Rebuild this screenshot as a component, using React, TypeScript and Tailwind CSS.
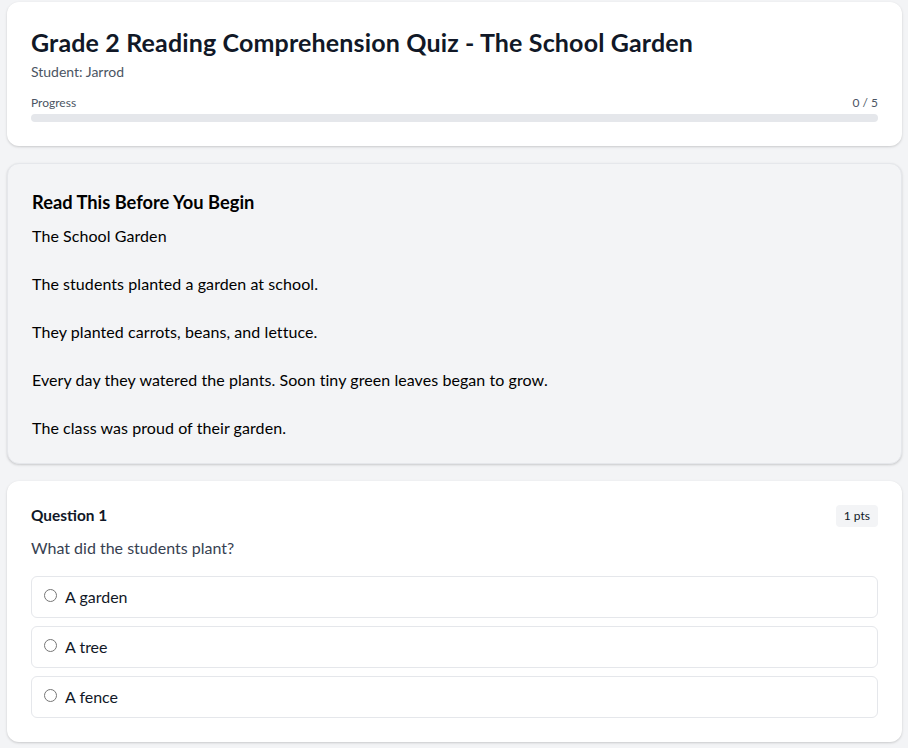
import React from "react";

const font = { fontFamily: "Lato, 'Noto Sans', sans-serif" };

const passage = [
  "The School Garden",
  "The students planted a garden at school.",
  "They planted carrots, beans, and lettuce.",
  "Every day they watered the plants. Soon tiny green leaves began to grow.",
  "The class was proud of their garden.",
];

const options = ["A garden", "A tree", "A fence"];

export default function App() {
  return (
    <div className="min-h-screen bg-[#f3f4f6] pl-[7px] pr-[6px] pt-[2px] pb-6" style={font}>
      <div className="flex flex-col gap-[17px]">
        <div className="rounded-xl bg-white p-6 shadow-[0_1px_3px_rgba(0,0,0,0.12),0_1px_2px_rgba(0,0,0,0.06)]">
          <h1 className="text-[25px] leading-8 font-bold tracking-[0.15px] text-[#111827]">
            Grade 2 Reading Comprehension Quiz - The School Garden
          </h1>
          <p className="mt-1 text-sm leading-5 text-[#4b5563]">Student: Jarrod</p>
          <div className="mt-[13px] flex justify-between text-xs leading-4 text-[#4b5563]">
            <span>Progress</span>
            <span>0 / 5</span>
          </div>
          <div className="mt-[3px] h-2 rounded-full bg-[#e5e7eb]" />
        </div>

        <div className="rounded-xl border border-[#e5e7eb] bg-[#f3f4f6] px-6 pt-6 pb-[23px] shadow-[0_1px_3px_rgba(0,0,0,0.12),0_1px_2px_rgba(0,0,0,0.06)]">
          <h2 className="text-[18.3px] leading-7 font-bold text-black">Read This Before You Begin</h2>
          <div className="mt-2 text-base leading-6 tracking-[0.07px] text-black">
            {passage.map((p, i) => (
              <p key={i} className={i > 0 ? "mt-6" : ""}>
                {p}
              </p>
            ))}
          </div>
        </div>

        <div className="rounded-xl bg-white px-6 pt-[23px] pb-6 shadow-[0_1px_3px_rgba(0,0,0,0.12),0_1px_2px_rgba(0,0,0,0.06)]">
          <div className="flex items-center justify-between h-6">
            <h3 className="text-[15.4px] font-bold text-[#111827]">Question 1</h3>
            <span className="rounded bg-[#f3f4f6] px-2 py-[3px] text-xs leading-4 text-[#111827]">1 pts</span>
          </div>
          <p className="mt-2 text-base leading-6 text-[#374151]">What did the students plant?</p>
          <div className="mt-4 flex flex-col gap-2">
            {options.map((o) => (
              <label
                key={o}
                className="flex items-center gap-2 rounded-md border border-[#e5e7eb] bg-white px-3 py-2 text-base leading-6 text-[#111827]"
              >
                <input type="radio" name="q1" className="m-0 h-[13px] w-[13px] -translate-y-[2px]" />
                <span>{o}</span>
              </label>
            ))}
          </div>
        </div>
      </div>
    </div>
  );
}
